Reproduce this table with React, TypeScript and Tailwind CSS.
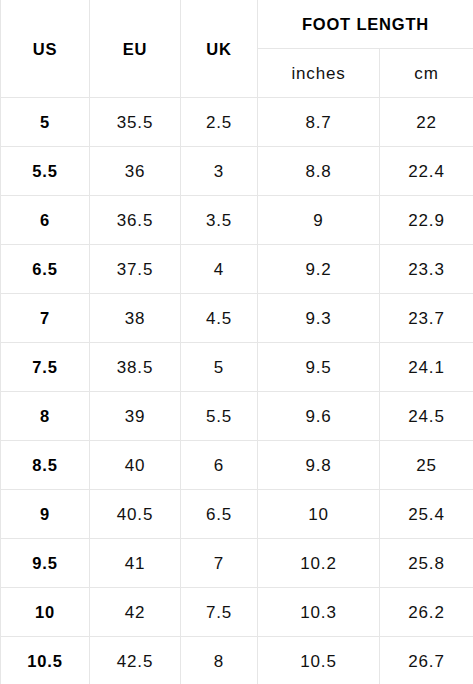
import React from 'react';

/* ─── Size chart data ─── */
const rows: [string, string, string, string, string][] = [
  ['5', '35.5', '2.5', '8.7', '22'],
  ['5.5', '36', '3', '8.8', '22.4'],
  ['6', '36.5', '3.5', '9', '22.9'],
  ['6.5', '37.5', '4', '9.2', '23.3'],
  ['7', '38', '4.5', '9.3', '23.7'],
  ['7.5', '38.5', '5', '9.5', '24.1'],
  ['8', '39', '5.5', '9.6', '24.5'],
  ['8.5', '40', '6', '9.8', '25'],
  ['9', '40.5', '6.5', '10', '25.4'],
  ['9.5', '41', '7', '10.2', '25.8'],
  ['10', '42', '7.5', '10.3', '26.2'],
  ['10.5', '42.5', '8', '10.5', '26.7'],
];

const cell = 'flex items-center justify-center h-[49px] pt-px border-b border-[#e6e6e6]';

export default function App() {
  return (
    <div className="w-[473px] h-[684px] overflow-hidden bg-white font-['Liberation_Sans',Arial,sans-serif] text-[#111] tracking-[0.05em]">
      <div className="grid grid-cols-[90px_91px_77px_122px_93px]">
        {/* Header */}
        <div className={`${cell} row-span-2 h-[98px] border-l border-r font-bold text-[16.5px] text-black`}>US</div>
        <div className={`${cell} row-span-2 h-[98px] border-r font-bold text-[16.5px] text-black`}>EU</div>
        <div className={`${cell} row-span-2 h-[98px] border-r font-bold text-[16.5px] text-black`}>UK</div>
        <div className={`${cell} col-span-2 font-bold text-[16.5px] text-black`}>FOOT LENGTH</div>
        <div className={`${cell} border-r text-[17px]`}>inches</div>
        <div className={`${cell} text-[17px]`}>cm</div>

        {/* Body */}
        {rows.map((r) => (
          <React.Fragment key={r[0]}>
            <div className={`${cell} border-l border-r font-bold text-[16.5px] text-black`}>{r[0]}</div>
            <div className={`${cell} border-r text-[17px]`}>{r[1]}</div>
            <div className={`${cell} border-r text-[17px]`}>{r[2]}</div>
            <div className={`${cell} border-r text-[17px]`}>{r[3]}</div>
            <div className={`${cell} text-[17px]`}>{r[4]}</div>
          </React.Fragment>
        ))}
      </div>
    </div>
  );
}
